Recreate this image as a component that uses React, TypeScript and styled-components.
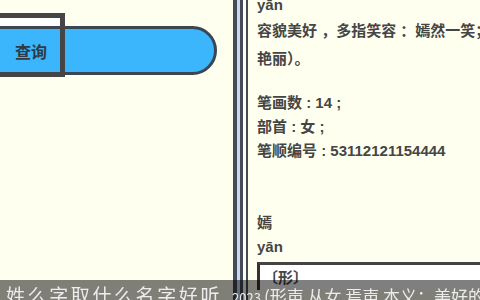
import React, { FC } from 'react';
import styled, { createGlobalStyle } from 'styled-components';

const GlobalStyle = createGlobalStyle`
  html, body {
    margin: 0;
    padding: 0;
    background: #fffff0;
    overflow: hidden;
  }
`;

const Page = styled.div`
  display: flex;
  flex-flow: row nowrap;
  width: 480px;
  height: 300px;
  overflow: hidden;
`;

const LeftPane = styled.div`
  width: 233px;
  flex: none;
  overflow: hidden;
  padding-top: 13px;
  box-sizing: border-box;
`;

const SearchRow = styled.div`
  position: relative;
  height: 64px;
  padding-top: 13px;
  box-sizing: border-box;
`;

const SearchButton = styled.button`
  display: flex;
  align-items: center;
  margin-left: -20px;
  width: 237px;
  height: 49px;
  padding: 0 0 0 32px;
  box-sizing: border-box;
  background: #3bb5fb;
  border: 3px solid #3c4650;
  border-radius: 0 25px 25px 0;
  color: #2e3a48;
  font: bold 16px 'Liberation Sans', 'Noto Sans CJK SC', sans-serif;
  cursor: pointer;
`;

// focus ring that sits over the left end of the button
const FocusRing = styled.div`
  position: absolute;
  top: 0;
  left: -10px;
  width: 75px;
  height: 64px;
  box-sizing: border-box;
  border: 5px solid #454545;
  background: linear-gradient(#fff 0 8px, transparent 8px);
  pointer-events: none;
  z-index: 1;
`;

const Divider = styled.div`
  width: 15px;
  flex: none;
  background: linear-gradient(
    to right,
    #444c58 0 4px,
    #c8d8f0 4px 7px,
    #444c58 7px 10px,
    transparent 10px 13px,
    #444c58 13px 15px
  );
`;

const RightPane = styled.div`
  flex: 1;
  min-width: 0;
  padding-left: 9px;
  overflow: hidden;
  white-space: nowrap;
  color: #454545;
  font: bold 15px 'Liberation Sans', 'Noto Sans CJK SC', sans-serif;
`;

const Pinyin = styled.div<{ $offset?: number }>`
  line-height: 24px;
  margin-top: ${(p) => p.$offset ?? 0}px;
`;

const Definition = styled.div`
  line-height: 28px;
`;

const StatList = styled.div`
  margin-top: 18px;
  line-height: 24px;
`;

const CharHeading = styled.div`
  margin-top: 48px;
  line-height: 24px;
`;

const SenseBox = styled.div`
  margin-top: 3px;
  border-top: 3px solid #444;
  border-left: 3px solid #3a3030;
  background: #fff;
  padding: 1px 0 0 3px;
  line-height: 24px;
`;

const Caption = styled.div`
  position: fixed;
  left: 0;
  right: 0;
  bottom: 0;
  height: 20px;
  padding: 5px 0 0 6px;
  box-sizing: border-box;
  overflow: hidden;
  white-space: nowrap;
  background: rgba(0, 0, 0, 0.5);
  color: #ececec;
  font: 19px/19px 'Noto Sans CJK SC', sans-serif;
`;

const CaptionLead = styled.span`
  letter-spacing: 2.6px;
`;

const CaptionYear = styled.span`
  font-size: 13px;
  margin: 0 3px 0 10px;
`;

const CaptionTail = styled.span`
  font-size: 17px;
`;

const STATS = ['笔画数 : 14 ;', '部首 : 女 ;', '笔顺编号 : 53112121154444'];

const App: FC = () => {
  return (
    <>
      <GlobalStyle />
      <Page>
        <LeftPane>
          <SearchRow>
            <FocusRing />
            <SearchButton type='button'>查询</SearchButton>
          </SearchRow>
        </LeftPane>
        <Divider />
        <RightPane>
          <Pinyin $offset={-7}>yān</Pinyin>
          <Definition>
            <div>容貌美好 ，多指笑容 ：嫣然一笑；鲜艳：嫣红（颜色</div>
            <div>艳丽）。</div>
          </Definition>
          <StatList>
            {STATS.map((s) => (
              <div key={s}>{s}</div>
            ))}
          </StatList>
          <CharHeading>嫣</CharHeading>
          <Pinyin>yān</Pinyin>
          <SenseBox>〔形〕</SenseBox>
        </RightPane>
      </Page>
      <Caption>
        <CaptionLead>姓么字取什么名字好听</CaptionLead>
        <CaptionYear>2023</CaptionYear>
        <CaptionTail>(形声 从女 焉声 本义：美好的样子</CaptionTail>
      </Caption>
    </>
  );
};

export default App;
